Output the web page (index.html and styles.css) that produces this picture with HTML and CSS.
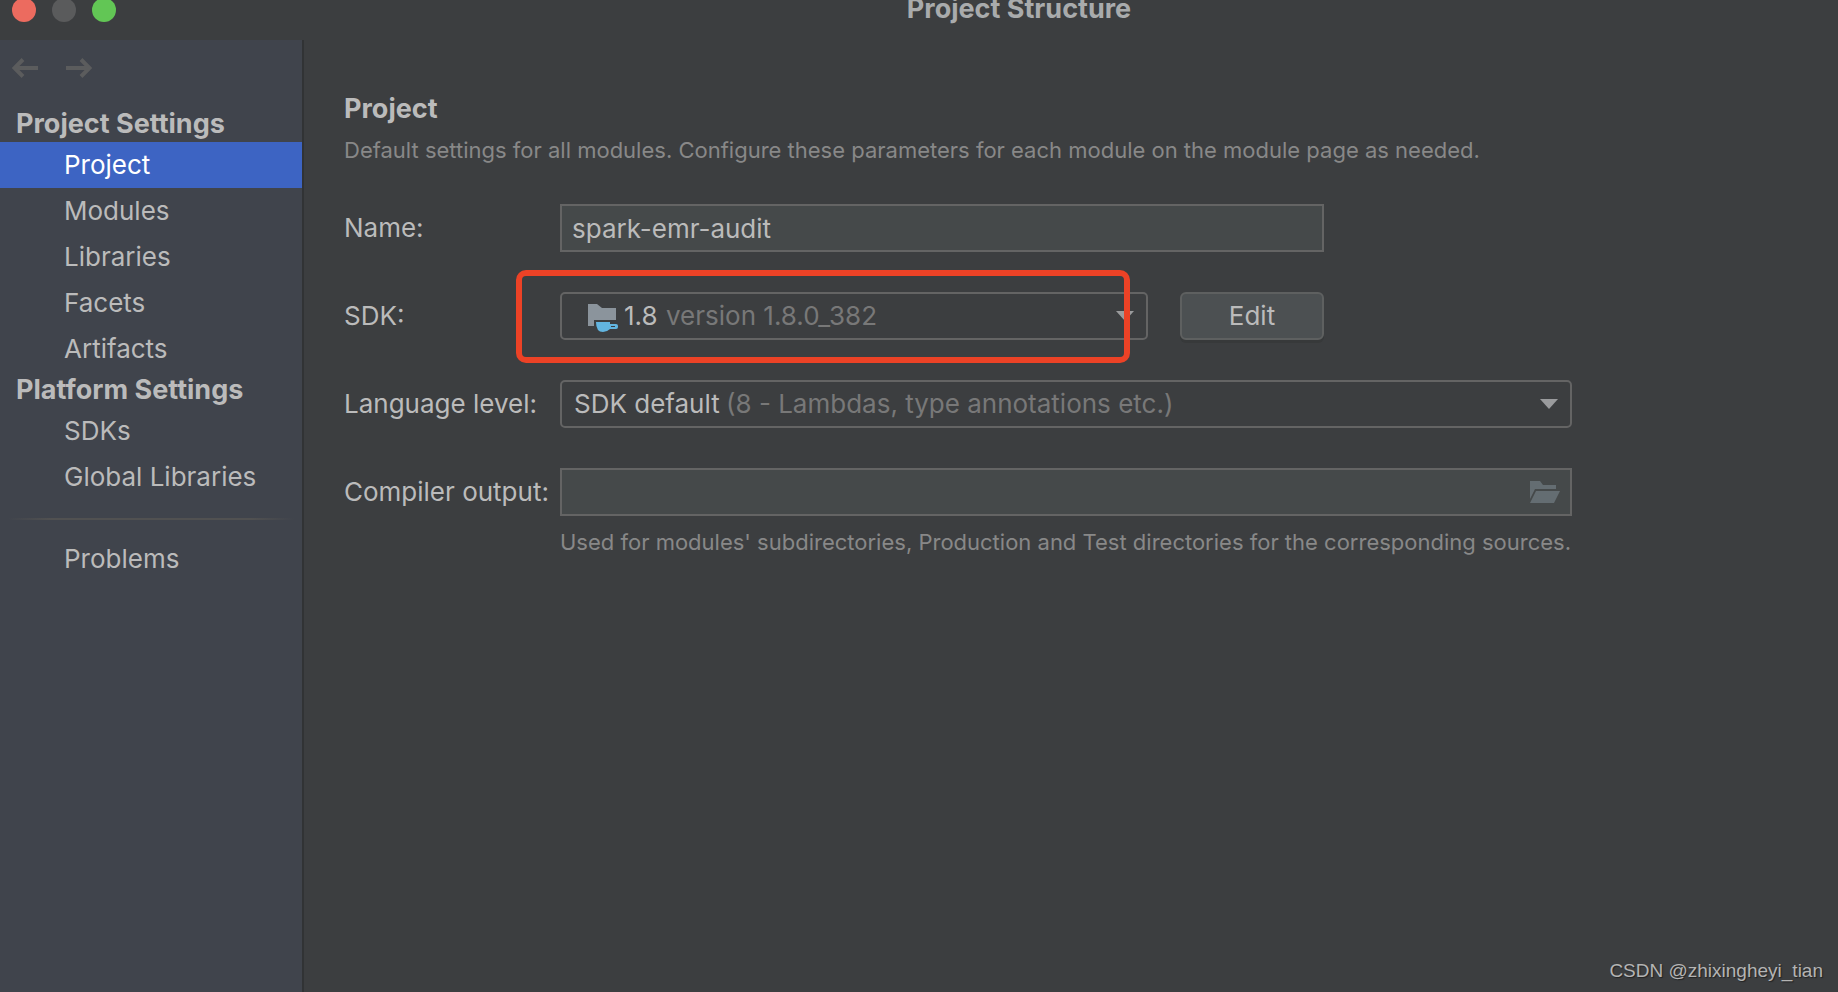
FILE: index.html
```
<!DOCTYPE html>
<html lang="en">
	<head>
		<meta charset="utf-8">
		<title>Project Structure</title>
		<link rel="stylesheet" href="styles.css">
	</head>
	<body>
		<header class="titlebar">
			<div class="lights">
				<button class="light light-close" aria-label="Close"></button>
				<button class="light light-minimize" aria-label="Minimize" disabled></button>
				<button class="light light-zoom" aria-label="Zoom"></button>
			</div>
			<h1>Project Structure</h1>
		</header>

		<div class="window">
			<aside class="sidebar">
				<div class="history">
					<button aria-label="Back" disabled>
						<svg width="26" height="20" viewBox="0 0 26 20">
							<path d="M26 10H3M11 1.5L2.5 10l8.500 8.500" />
						</svg>
					</button>
					<button aria-label="Forward" disabled>
						<svg width="26" height="20" viewBox="0 0 26 20">
							<path d="M0 10h23M15 1.500L23.500 10 15 18.500" />
						</svg>
					</button>
				</div>

				<nav>
					<h2>Project Settings</h2>
					<a href="#project" class="active">Project</a>
					<a href="#modules">Modules</a>
					<a href="#libraries">Libraries</a>
					<a href="#facets">Facets</a>
					<a href="#artifacts">Artifacts</a>
					<h2>Platform Settings</h2>
					<a href="#sdks">SDKs</a>
					<a href="#global-libraries">Global Libraries</a>
					<div class="divider"></div>
					<a href="#problems">Problems</a>
				</nav>
			</aside>

			<main>
				<h2>Project</h2>
				<p class="hint">Default settings for all modules. Configure these parameters for each module on the module page as needed.</p>

				<form class="settings">
					<label for="name">Name:</label>
					<input type="text" id="name" class="text-field" value="spark-emr-audit">

					<label for="sdk">SDK:</label>
					<div class="sdk-row">
						<div class="combo combo-sdk">
							<select id="sdk">
								<option>1.8</option>
							</select>
							<svg class="sdk-icon" width="30" height="28" viewBox="0 0 30 28">
								<path fill="#8b949c" d="M0 0h9l5 4h14v12H6v6H0z" />
								<path fill="#62b5e0" fill-rule="evenodd" d="M8 18h14v2h6q2 0 2 2v1q0 2-2 2h-6q-3 3-7 3-7 0-7-10zM23 22v1h4v-1z" />
							</svg>
							<span class="detail">version 1.8.0_382</span>
							<svg class="arrow" width="18" height="10" viewBox="0 0 18 10">
								<path d="M0 0h18L9 10z" />
							</svg>
							<div class="highlight"></div>
						</div>
						<button type="button" class="btn">Edit</button>
					</div>

					<label for="level">Language level:</label>
					<div class="combo combo-level wide">
						<select id="level">
							<option>SDK default</option>
						</select>
						<span class="detail">(8 - Lambdas, type annotations etc.)</span>
						<svg class="arrow" width="18" height="10" viewBox="0 0 18 10">
							<path d="M0 0h18L9 10z" />
						</svg>
					</div>

					<label for="output">Compiler output:</label>
					<div class="path-field wide">
						<input type="text" id="output" class="text-field">
						<button type="button" class="browse" aria-label="Browse">
							<svg width="30" height="22" viewBox="0 0 30 22">
								<path d="M0 0h10l3 4h13v4H5L0 18z" />
								<path d="M6 10h24l-6 12H0z" />
							</svg>
						</button>
					</div>
				</form>
				<p class="hint output-hint">Used for modules' subdirectories, Production and Test directories for the corresponding sources.</p>
			</main>
		</div>

		<div class="watermark">CSDN @zhixingheyi_tian</div>
	</body>
</html>
```
FILE: styles.css
```
* {
	margin: 0;
	padding: 0;
	box-sizing: border-box;
}

body {
	display: flex;
	flex-direction: column;
	min-height: 100vh;
	background: #3c3e40;
	color: #bbbbbb;
	font-family: Inter, "Liberation Sans", sans-serif;
	font-size: 26px;
	line-height: 32px;
	position: relative;
}

button,
input,
select {
	font: inherit;
	color: inherit;
	border: none;
	background: none;
}

h1,
h2 {
	font-size: 27px;
	font-weight: 700;
}

/* Title bar */
.titlebar {
	display: grid;
	grid-template-columns: calc(50% + 100px) 1fr;
	height: 40px;
}

.titlebar h1 {
	grid-area: 1 / 1 / 2 / 3;
	padding-left: 200px;
	color: #a9abac;
	line-height: 18px;
	text-align: center;
}

.lights {
	grid-area: 1 / 1;
	display: flex;
	gap: 16px;
	margin: -2px 0 0 12px;
}

.light {
	width: 24px;
	height: 24px;
	border-radius: 50%;
}

.light-close {
	background: #ec6b5f;
}

.light-minimize {
	background: #5a5b5c;
}

.light-zoom {
	background: #62c655;
}

.window {
	display: flex;
	flex: 1;
}

/* Sidebar */
.sidebar {
	flex: 0 0 304px;
	background: #40444c;
	border-right: 2px solid #313335;
}

.history {
	display: flex;
	gap: 28px;
	padding: 18px 12px;
	height: 66px;
}

.history button {
	width: 26px;
	height: 20px;
}

.history svg {
	display: block;
	fill: none;
	stroke: #5b5c5d;
	stroke-width: 4;
}

nav h2 {
	padding: 2px 16px;
}

nav a {
	display: block;
	padding: 7px 0 7px 64px;
	color: inherit;
	text-decoration: none;
	white-space: nowrap;
}

nav a.active {
	background: #3d64c3;
	color: #ffffff;
}

.divider {
	height: 2px;
	margin: 18px 8px 16px;
	background: linear-gradient(90deg, transparent, #515151 15%, #515151 85%, transparent);
}

/* Project page */
main {
	flex: 1;
	min-width: 0;
	padding: 53px 40px;
}

.hint {
	color: #888888;
	font-size: 22px;
}

main > h2 {
	margin-bottom: 9px;
}

.settings {
	display: grid;
	grid-template-columns: 216px minmax(0, 764px) minmax(0, 248px);
	row-gap: 40px;
	align-items: center;
	margin-top: 38px;
}

.settings label {
	grid-column: 1;
	white-space: nowrap;
}

.wide {
	grid-column: 2 / 4;
}

.text-field {
	width: 100%;
	height: 48px;
	padding: 0 10px;
	background: #45494a;
	border: 2px solid #646464;
}

.sdk-row {
	display: flex;
	gap: 32px;
}

/* Everything in a combo shares one cell, the select lies underneath */
.combo {
	display: grid;
	align-items: center;
	position: relative;
}

.combo > * {
	grid-area: 1 / 1;
}

.combo > :not(select) {
	pointer-events: none;
}

.combo select {
	appearance: none;
	width: 100%;
	height: 48px;
	padding: 0 12px;
	border: 2px solid #646464;
	border-radius: 5px;
}

.combo-sdk {
	flex: 1;
}

.combo-sdk select {
	padding-left: 62px;
}

.sdk-icon {
	margin: 4px 0 0 28px;
}

.detail {
	color: #787878;
	white-space: nowrap;
}

.combo-sdk .detail {
	margin-left: 106px;
}

.combo-level .detail {
	margin-left: 166px;
}

.arrow {
	justify-self: end;
	margin-right: 14px;
	fill: #9a9b9d;
}

.highlight {
	position: absolute;
	top: -22px;
	right: 18px;
	bottom: -23px;
	left: -44px;
	border: 6px solid #ec4226;
	border-radius: 10px;
}

.btn {
	width: 144px;
	height: 48px;
	background: #4c5052;
	border: 2px solid #5e6060;
	border-radius: 6px;
	box-shadow: 0 3px 0 #37393a;
}

.path-field {
	display: flex;
	align-items: center;
}

.path-field .text-field {
	padding-right: 50px;
}

.browse {
	flex: none;
	width: 30px;
	height: 22px;
	margin-left: -42px;
}

.browse svg {
	display: block;
	fill: #646d72;
}

.output-hint {
	margin: 10px 0 0 216px;
}

.watermark {
	position: absolute;
	right: 15px;
	bottom: 5px;
	color: #b4b4b4;
	font-family: "Liberation Sans", sans-serif;
	font-size: 19px;
	text-shadow: 1px 1px 1px #222222;
}
```
